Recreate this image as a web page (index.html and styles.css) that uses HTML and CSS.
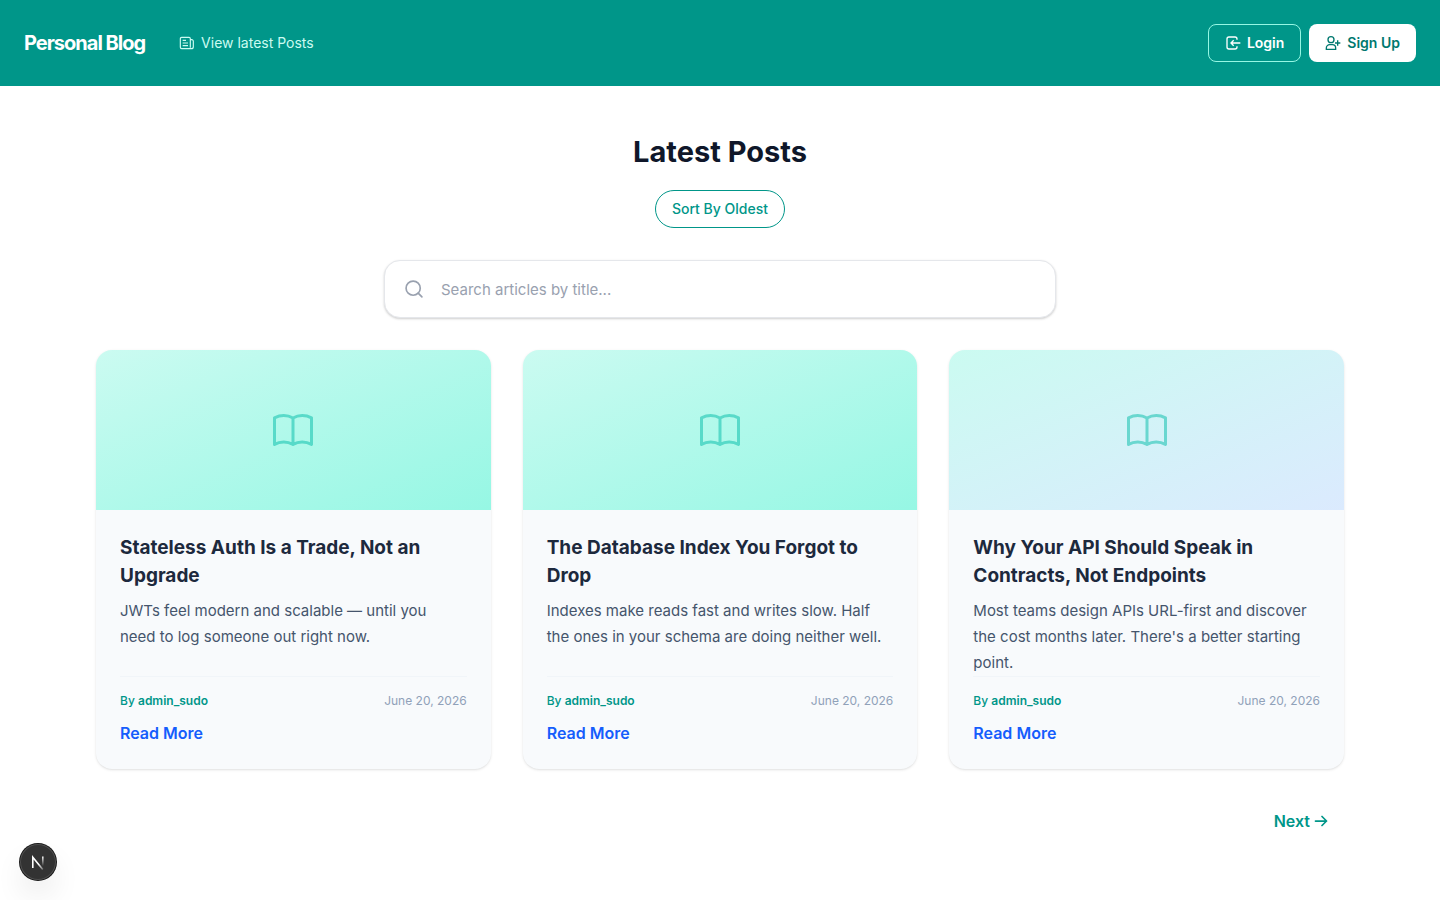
FILE: index.html
```html
<!DOCTYPE html>
<html lang="en">

<head>
    <meta charset="utf-8">
    <meta name="viewport" content="width=device-width, initial-scale=1">
    <title>Personal Blog</title>
    <link rel="stylesheet" href="styles.css">
</head>

<body>
    <header class="header">
        <nav class="nav">
            <a class="brand" href="#">Personal Blog</a>
            <a class="nav-link" href="#posts">
                <svg width="16" height="16" viewBox="0 0 24 24" fill="none" stroke="currentColor" stroke-width="1.75">
                    <path d="M18 20.5H4a2 2 0 0 1-2-2v-13a2 2 0 0 1 2-2h11a2 2 0 0 1 2 2v13.5M17 7h2a2.5 2.5 0 0 1 2.500 2.500v8a3 3 0 0 1-3 3h-1"></path>
                    <path d="M5.500 8h5M5.500 12h8M5.500 16h8"></path>
                </svg>
                View latest Posts
            </a>
        </nav>
        <div class="actions">
            <a class="button outline-button" href="#">
                <svg width="16" height="16" viewBox="0 0 24 24" fill="none" stroke="currentColor" stroke-width="2">
                    <path d="M18 7V6a3 3 0 0 0-3-3H6a3 3 0 0 0-3 3v12a3 3 0 0 0 3 3h9a3 3 0 0 0 3-3v-1"></path>
                    <path d="M23 12H10M13 8l-4 4 4 4"></path>
                </svg>
                Login
            </a>
            <a class="button solid-button" href="#">
                <svg width="16" height="16" viewBox="0 0 24 24" fill="none" stroke="currentColor" stroke-width="2">
                    <circle cx="9" cy="7" r="4.5"></circle>
                    <path d="M2 21.5v-2a5 5 0 0 1 5-5h4a5 5 0 0 1 5 5v2zM19 8v8M15 12h8"></path>
                </svg>
                Sign Up
            </a>
        </div>
    </header>

    <main class="main" id="posts">
        <h1>Latest Posts</h1>
        <button class="sort-button" type="button">Sort By Oldest</button>

        <div class="search-box">
            <svg class="search-icon" width="20" height="20" viewBox="0 0 24 24" fill="none" stroke="currentColor"
                stroke-width="2" stroke-linecap="round">
                <circle cx="11" cy="11" r="8.5"></circle>
                <line x1="21.5" y1="21.5" x2="17" y2="17"></line>
            </svg>
            <input type="text" id="searchInput" aria-label="Search articles" placeholder="Search articles by title...">
        </div>

        <div class="posts">
            <article class="card">
                <div class="cover">
                    <svg width="48" height="48" viewBox="0 0 24 24" fill="none" stroke="currentColor" stroke-width="1.5">
                        <path d="M12 6c-1.4-.8-3-1.2-4.6-1.2S4.2 5.2 2.75 5.9v13.3c1.4-.8 3-1.2 4.6-1.2s3.2.4 4.65 1.2c1.4-.8 3-1.2 4.6-1.2s3.2.4 4.65 1.2V5.9c-1.4-.7-3-1.1-4.65-1.1S13.4 5.2 12 6zv13.2" stroke-linecap="round" stroke-linejoin="round"></path>
                    </svg>
                </div>
                <div class="card-body">
                    <h2>Stateless Auth Is a Trade, Not an Upgrade</h2>
                    <p class="excerpt">JWTs feel modern and scalable — until you<br> need to log someone out right now.</p>
                    <div class="meta">
                        <span class="author">By <b>admin_sudo</b></span>
                        <time datetime="2026-06-20">June 20, 2026</time>
                    </div>
                    <a class="read-more" href="#">Read More</a>
                </div>
            </article>

            <article class="card">
                <div class="cover">
                    <svg width="48" height="48" viewBox="0 0 24 24" fill="none" stroke="currentColor" stroke-width="1.5">
                        <path d="M12 6c-1.4-.8-3-1.2-4.6-1.2S4.2 5.2 2.75 5.9v13.3c1.4-.8 3-1.2 4.6-1.2s3.2.4 4.65 1.2c1.4-.8 3-1.2 4.6-1.2s3.2.4 4.65 1.2V5.9c-1.4-.7-3-1.1-4.65-1.1S13.4 5.2 12 6zv13.2" stroke-linecap="round" stroke-linejoin="round"></path>
                    </svg>
                </div>
                <div class="card-body">
                    <h2>The Database Index You Forgot to Drop</h2>
                    <p class="excerpt">Indexes make reads fast and writes slow. Half the ones in your schema are doing neither well.</p>
                    <div class="meta">
                        <span class="author">By <b>admin_sudo</b></span>
                        <time datetime="2026-06-20">June 20, 2026</time>
                    </div>
                    <a class="read-more" href="#">Read More</a>
                </div>
            </article>

            <article class="card">
                <div class="cover cover-blue">
                    <svg width="48" height="48" viewBox="0 0 24 24" fill="none" stroke="currentColor" stroke-width="1.5">
                        <path d="M12 6c-1.4-.8-3-1.2-4.6-1.2S4.2 5.2 2.75 5.9v13.3c1.4-.8 3-1.2 4.6-1.2s3.2.4 4.65 1.2c1.4-.8 3-1.2 4.6-1.2s3.2.4 4.65 1.2V5.9c-1.4-.7-3-1.1-4.65-1.1S13.4 5.2 12 6zv13.2" stroke-linecap="round" stroke-linejoin="round"></path>
                    </svg>
                </div>
                <div class="card-body">
                    <h2>Why Your API Should Speak in Contracts, Not Endpoints</h2>
                    <p class="excerpt">Most teams design APIs URL-first and discover the cost months later. There's a better starting point.</p>
                    <div class="meta">
                        <span class="author">By <b>admin_sudo</b></span>
                        <time datetime="2026-06-20">June 20, 2026</time>
                    </div>
                    <a class="read-more" href="#">Read More</a>
                </div>
            </article>
        </div>

        <div class="pagination">
            <a class="next-link" href="#">
                Next
                <svg width="14" height="14" viewBox="0 0 14 14" fill="none" stroke="currentColor" stroke-width="1.75"
                    stroke-linecap="round" stroke-linejoin="round">
                    <path d="M1.5 7H12.5M8 2.5L12.5 7L8 11.5"></path>
                </svg>
            </a>
        </div>
    </main>

    <button class="dev-badge" type="button" aria-label="Open dev tools">
        <svg width="36" height="36" viewBox="0 0 36 36" fill="none">
            <defs>
                <linearGradient id="diagonal" x1="19" y1="20" x2="25" y2="27" gradientUnits="userSpaceOnUse">
                    <stop stop-color="#fff"></stop>
                    <stop offset="1" stop-color="#fff" stop-opacity="0"></stop>
                </linearGradient>
                <linearGradient id="stem" x1="23" y1="12" x2="23" y2="22" gradientUnits="userSpaceOnUse">
                    <stop stop-color="#fff"></stop>
                    <stop offset="1" stop-color="#fff" stop-opacity="0"></stop>
                </linearGradient>
            </defs>
            <path d="M12.8 24V13.2L22.8 25.6" stroke="url(#diagonal)" stroke-width="1.6"></path>
            <path d="M22.8 12.5L22.81 22" stroke="url(#stem)" stroke-width="1.6"></path>
        </svg>
    </button>
</body>

</html>
```
FILE: styles.css
```css
* {
    box-sizing: border-box;
}

body {
    margin: 0;
    min-height: 100vh;
    font-family: Inter, sans-serif;
    font-size: 16px;
    line-height: 24px;
    color: #0f172a;
    background-color: #ffffff;
}

a {
    text-decoration: none;
}

.header {
    display: flex;
    justify-content: space-between;
    align-items: center;
    padding: 24px;
    background-color: #009689;
}

.nav {
    display: flex;
    align-items: center;
    gap: 34px;
}

.brand {
    font-size: 20px;
    line-height: 28px;
    font-weight: 700;
    letter-spacing: -1px;
    color: #ffffff;
}

.nav-link {
    display: flex;
    align-items: center;
    gap: 6px;
    font-size: 14px;
    line-height: 20px;
    color: #cbfbf1;
}

.actions {
    display: flex;
    gap: 8px;
}

.button {
    display: flex;
    align-items: center;
    gap: 6px;
    padding: 8px 16px;
    border-radius: 8px;
    font-size: 14px;
    line-height: 20px;
    font-weight: 600;
}

.outline-button {
    border: 1px solid #96f7e4;
    color: #ffffff;
}

.solid-button {
    background-color: #ffffff;
    color: #00786f;
}

.main {
    display: flex;
    flex-direction: column;
    align-items: center;
    max-width: 1280px;
    margin: 0 auto;
    padding: 48px 16px;
}

h1 {
    margin: 0 0 20px;
    font-size: 29px;
    line-height: 36px;
    font-weight: 700;
}

.sort-button {
    padding: 8px 16px;
    border: 1px solid #009689;
    border-radius: 20px;
    background: none;
    font-family: inherit;
    font-size: 14px;
    line-height: 20px;
    font-weight: 500;
    color: #009689;
    cursor: pointer;
}

.search-box {
    position: relative;
    width: 100%;
    max-width: 672px;
    margin: 32px 0;
}

.search-box input {
    display: block;
    width: 100%;
    height: 58px;
    padding: 16px 24px 16px 56px;
    border: 1px solid #e5e7eb;
    border-radius: 16px;
    background-color: #ffffff;
    box-shadow: 0 1px 3px rgba(0, 0, 0, 0.1), 0 1px 2px rgba(0, 0, 0, 0.1);
    font-family: inherit;
    font-size: 15px;
    line-height: 24px;
    color: #0f172a;
    outline: none;
}

.search-box input::placeholder {
    color: #99a1af;
    opacity: 1;
}

.search-icon {
    position: absolute;
    left: 20px;
    top: 50%;
    transform: translateY(-50%);
    color: #99a1af;
}

.posts {
    display: grid;
    grid-template-columns: repeat(3, 1fr);
    gap: 32px;
    width: 100%;
}

.card {
    display: flex;
    flex-direction: column;
    border-radius: 16px;
    overflow: hidden;
    background-color: #f8fafc;
    box-shadow: 0 1px 3px rgba(0, 0, 0, 0.1), 0 1px 2px -1px rgba(0, 0, 0, 0.1);
}

.cover {
    display: flex;
    align-items: center;
    justify-content: center;
    height: 160px;
    background: linear-gradient(to bottom right, #cbfbf1, #96f7e4);
    color: rgba(0, 187, 167, 0.5);
}

.cover-blue {
    background: linear-gradient(to bottom right, #cbfbf1, #dbeafe);
}

.card-body {
    display: flex;
    flex-direction: column;
    flex: 1;
    padding: 24px;
}

h2 {
    margin: 0 0 8px;
    font-size: 19px;
    line-height: 28px;
    font-weight: 700;
    color: #1d293d;
}

.excerpt {
    flex: 1;
    margin: 0;
    font-size: 15px;
    line-height: 26px;
    color: #45556c;
}

.meta {
    display: flex;
    justify-content: space-between;
    margin-bottom: 12px;
    padding-top: 16px;
    border-top: 1px solid #f1f5f9;
    font-size: 12px;
    line-height: 16px;
    color: #90a1b9;
}

.author {
    font-weight: 500;
    color: #009689;
}

.author b {
    font-weight: 600;
}

.read-more {
    font-weight: 600;
    color: #155dfc;
}

.pagination {
    display: flex;
    justify-content: flex-end;
    width: 100%;
    margin-top: 40px;
    padding: 0 16px;
}

.next-link {
    display: flex;
    align-items: center;
    gap: 4px;
    font-weight: 600;
    color: #009689;
}

.dev-badge {
    position: fixed;
    left: 20px;
    bottom: 20px;
    width: 36px;
    height: 36px;
    padding: 0;
    border: none;
    border-radius: 50%;
    background-color: #333333;
    box-shadow: 0 0 0 1px #171717, inset 0 0 0 1px rgba(255, 255, 255, 0.14), 0 16px 32px -8px rgba(0, 0, 0, 0.24);
    cursor: pointer;
}

.dev-badge svg {
    display: block;
}

@media (max-width: 900px) {
    .posts {
        grid-template-columns: 1fr;
    }
}
```
